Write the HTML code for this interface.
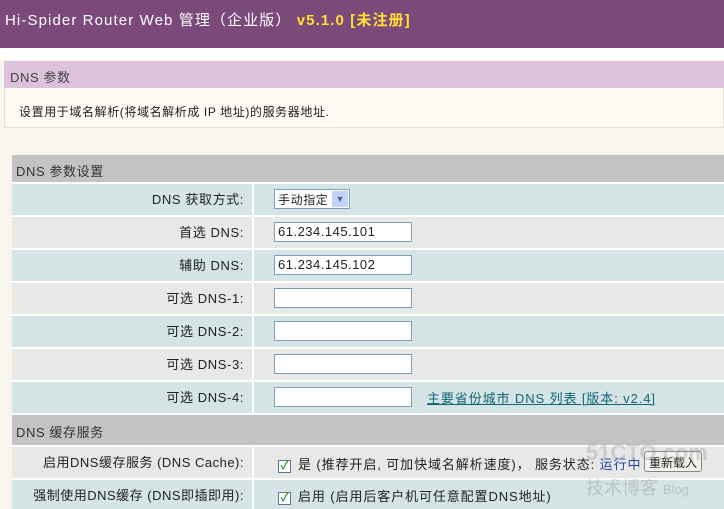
<!DOCTYPE html><html><head><meta charset="utf-8"><style>
*{margin:0;padding:0;box-sizing:border-box}
body{width:724px;height:509px;overflow:hidden;background:#f8f6ec;font-family:"Liberation Sans","Noto Sans CJK SC",sans-serif;font-size:12px;color:#222;position:relative;letter-spacing:0.6px}
.hd{position:absolute;left:0;top:0;width:724px;height:48px;background:#7b4a7b;color:#fff;font-size:15px;padding:9px 0 0 5px;letter-spacing:1.1px}
.hd b{color:#ffe033;font-weight:bold}
.gap{position:absolute;left:0;top:48px;width:724px;height:12px;background:#fff}
.p1{position:absolute;left:4px;top:61px;width:720px;height:27px;background:#dcc3db;padding:6px 0 0 6px;color:#444;font-size:13px}
.p2{position:absolute;left:4px;top:88px;width:720px;height:40px;background:#fcfaf2;border:1px solid #e5e0d0;border-top:none;padding:15px 0 0 14px;font-size:12px}
.sec{position:absolute;left:12px;width:712px;background:#c3c3c3;color:#333;padding:6px 0 0 4px;font-size:13px}
.row{position:absolute;left:12px;width:712px;border-top:2px solid #fff}
.row .l{position:absolute;left:0;top:0;width:242px;height:100%;text-align:right;padding-right:8px;border-right:2px solid #fff;font-size:13px;padding-top:5px}
.row .r{position:absolute;left:262px;top:0;font-size:13px}
.b{background:#d5e4e4}.g{background:#e8e8e6}
.inp{position:absolute;top:5px;left:262px;width:138px;height:20px;background:#fff;border:1px solid #7f9db9;font-size:13px;padding:1px 3px;letter-spacing:0.5px}
.cb{display:inline-block;width:13px;height:13px;border:1px solid #5a7a90;background:#fff;color:#2a9a2a;font-size:11px;line-height:11px;text-align:center;vertical-align:0;margin-right:7px;font-weight:bold;letter-spacing:0}
</style></head><body>
<div class="hd">Hi-Spider Router Web 管理（企业版） <b>v5.1.0 [未注册]</b></div>
<div class="gap"></div>
<div class="p1">DNS 参数</div>
<div class="p2">设置用于域名解析(将域名解析成 IP 地址)的服务器地址.</div>
<div class="sec" style="top:155px;height:27px">DNS 参数设置</div>
<div class="row b" style="top:182px;height:33px"><div class="l">DNS 获取方式:</div><div style="position:absolute;left:262px;top:5px;width:76px;height:20px;border:1px solid #7f9db9;background:#fff;font-size:12px;padding:1px 3px">手动指定<span style="position:absolute;right:1px;top:1px;width:16px;height:16px;background:#c1d3fb;color:#4d6185;font-size:9px;text-align:center;line-height:16px;letter-spacing:0">▼</span></div></div>
<div class="row g" style="top:215px;height:33px"><div class="l">首选 DNS:</div><div class="inp">61.234.145.101</div></div>
<div class="row b" style="top:248px;height:33px"><div class="l">辅助 DNS:</div><div class="inp">61.234.145.102</div></div>
<div class="row g" style="top:281px;height:33px"><div class="l">可选 DNS-1:</div><div class="inp"></div></div>
<div class="row b" style="top:314px;height:33px"><div class="l">可选 DNS-2:</div><div class="inp"></div></div>
<div class="row g" style="top:347px;height:33px"><div class="l">可选 DNS-3:</div><div class="inp"></div></div>
<div class="row b" style="top:380px;height:33px"><div class="l">可选 DNS-4:</div><div class="inp"></div><div style="position:absolute;left:415px;top:6px;color:#116677;text-decoration:underline;font-size:13px;letter-spacing:0.9px">主要省份城市 DNS 列表 [版本: v2.4]</div></div>
<div class="sec" style="top:413px;height:32px;padding-top:7px;border-top:2px solid #fff">DNS 缓存服务</div>
<div class="row g" style="top:445px;height:33px"><div class="l" style="letter-spacing:0.5px">启用DNS缓存服务 (DNS Cache):</div><div class="r" style="left:266px;top:7px;letter-spacing:0.9px"><span class="cb">✓</span>是 (推荐开启, 可加快域名解析速度)， 服务状态: <span style="color:#2244aa">运行中</span></div><div style="position:absolute;left:632px;top:4px;width:58px;height:21px;border:1px solid #888;border-radius:3px;background:#f2f2ee;font-size:12px;text-align:center;padding-top:2px;letter-spacing:0">重新载入</div></div>
<div class="row b" style="top:478px;height:31px"><div class="l" style="letter-spacing:0.5px">强制使用DNS缓存 (DNS即插即用):</div><div class="r" style="left:266px;top:6px;letter-spacing:0.9px"><span class="cb">✓</span>启用 (启用后客户机可任意配置DNS地址)</div></div>
<div style="position:absolute;left:586px;top:440px;color:rgba(150,150,150,.35);font-size:22px;font-weight:bold;letter-spacing:0">51CTO.com</div>
<div style="position:absolute;left:586px;top:474px;color:rgba(150,150,150,.4);font-size:18px;letter-spacing:0">技术博客 <span style="font-size:13px">Blog</span></div>
</body></html>
